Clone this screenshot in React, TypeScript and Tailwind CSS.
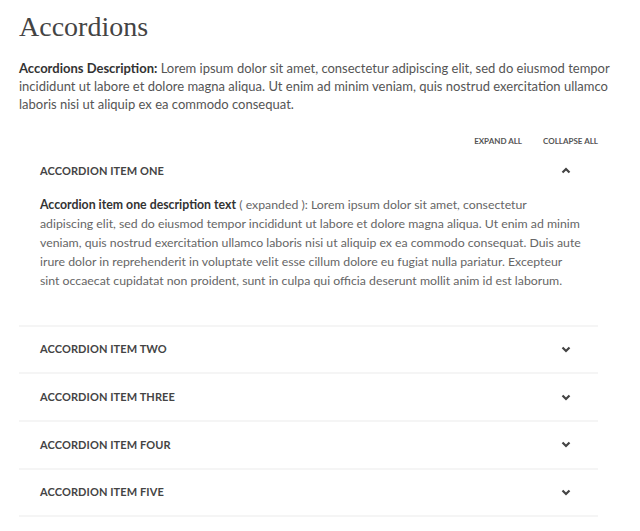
import { useState } from "react";

const items = [
  { id: "one", title: "Accordion Item One" },
  { id: "two", title: "Accordion Item Two" },
  { id: "three", title: "Accordion Item Three" },
  { id: "four", title: "Accordion Item Four" },
  { id: "five", title: "Accordion Item Five" },
];

function Chevron({ up }: { up?: boolean }) {
  return (
    <svg width="10" height="7" viewBox="0 0 10 7" className="text-[#444]">
      <polyline
        points={up ? "1.5,5.5 5,2 8.5,5.5" : "1.5,1.5 5,5 8.5,1.5"}
        fill="none"
        stroke="currentColor"
        strokeWidth="2.2"
      />
    </svg>
  );
}

export default function App() {
  const [open, setOpen] = useState<string[]>(["one"]);

  const toggle = (id: string) =>
    setOpen((o) => (o.includes(id) ? o.filter((x) => x !== id) : [...o, id]));

  return (
    <div className="bg-white pl-[19px] pr-[42px] pt-[9px] pb-4 text-[#555] font-['Lato',sans-serif]">
      <h1 className="font-['Liberation_Serif',serif] text-[28px] leading-[36px] text-[#444]">Accordions</h1>
      <p className="mt-[14px] mr-[-20px] text-[13px] leading-[18px] text-[#555]">
        <b className="text-[#333]">Accordions Description:</b> Lorem ipsum dolor sit amet, consectetur adipiscing elit, sed do eiusmod tempor incididunt ut labore et dolore magna aliqua. Ut enim ad minim veniam, quis nostrud exercitation ullamco laboris nisi ut aliquip ex ea commodo consequat.
      </p>

      <div className="mt-[22px] flex justify-end gap-[21px] text-[8px] font-bold text-[#555]">
        <button className="uppercase" onClick={() => setOpen(items.map((i) => i.id))}>Expand All</button>
        <button className="uppercase" onClick={() => setOpen([])}>Collapse All</button>
      </div>

      <div className="mt-[1px]">
        {items.map((item) => {
          const isOpen = open.includes(item.id);
          return (
            <div key={item.id} className="border-b-2 border-[#f5f5f5]">
              <button
                onClick={() => toggle(item.id)}
                className="flex h-[45.7px] w-full items-center justify-between pl-[21px] pr-[27px] text-left"
              >
                <span className="text-[11px] font-bold uppercase tracking-[0.1px] text-[#444]">{item.title}</span>
                <Chevron up={isOpen} />
              </button>
              {isOpen && (
                <div className="pl-[21px] pr-[16px] pt-[1px] pb-[35px] text-[12.3px] leading-[19px] text-[#666]">
                  <b className="text-[#333]">Accordion item {item.id} description text</b> ( expanded ): Lorem ipsum dolor sit amet, consectetur adipiscing elit, sed do eiusmod tempor incididunt ut labore et dolore magna aliqua. Ut enim ad minim veniam, quis nostrud exercitation ullamco laboris nisi ut aliquip ex ea commodo consequat. Duis aute irure dolor in reprehenderit in voluptate velit esse cillum dolore eu fugiat nulla pariatur. Excepteur sint occaecat cupidatat non proident, sunt in culpa qui officia deserunt mollit anim id est laborum.
                </div>
              )}
            </div>
          );
        })}
      </div>
    </div>
  );
}
